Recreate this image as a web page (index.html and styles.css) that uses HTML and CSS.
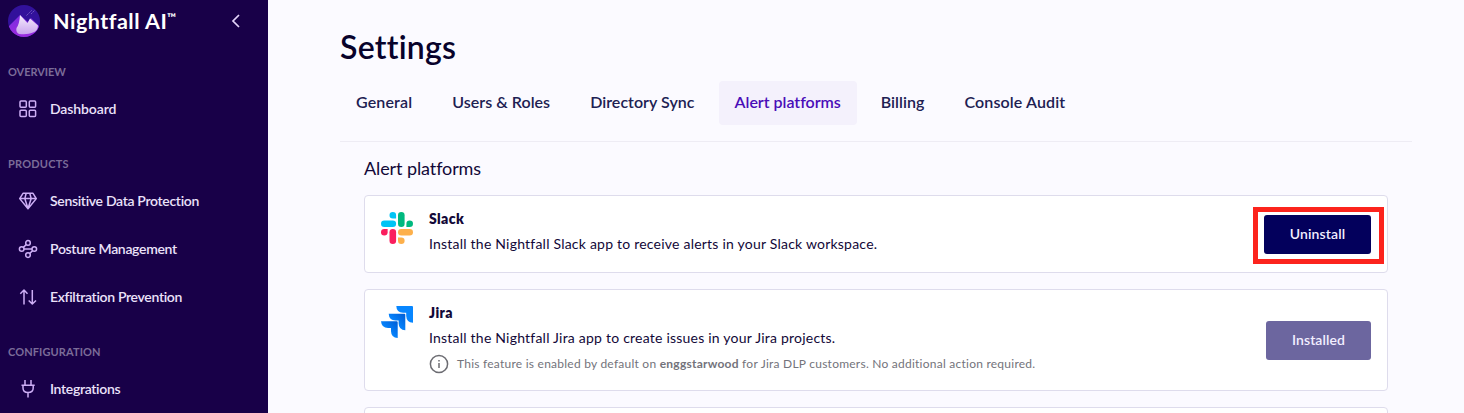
FILE: index.html
```
<!DOCTYPE html>
<html lang="en">
<head>
<meta charset="utf-8">
<title>Settings</title>
<link rel="stylesheet" href="styles.css">
</head>
<body>
<div class="app">
  <aside class="sidebar">
    <div class="brand">
      <svg class="logo" viewBox="0 0 32 32">
        <defs>
          <linearGradient id="peak" x1="0" y1="0" x2="0" y2="1"><stop offset="0" stop-color="#f5edfc"/><stop offset="1" stop-color="#c9a5ee"/></linearGradient>
          <linearGradient id="ridge" x1="0" y1="0" x2="0" y2="1"><stop offset="0" stop-color="#7a2be0"/><stop offset="1" stop-color="#9c2de0"/></linearGradient>
          <clipPath id="disc"><circle cx="16" cy="16" r="16"/></clipPath>
        </defs>
        <g clip-path="url(#disc)">
          <rect width="32" height="32" fill="#32119b"/>
          <path d="M0 22 L3 19 L12 10 L20 17 L23 13 L32 22 L27 32 H0Z" fill="url(#ridge)"/>
          <path d="M12 10 L19.500 18 L22 13.500 L30 20.500 Q30 26 25 27.500 Q20 30 11 29 Q7.500 27 8.500 23 Q11.500 19 12 10Z" fill="url(#peak)"/>
          <path d="M18.500 10.500 L24 5 M23 9 L27 5" stroke="#8067c8" stroke-width=".8" stroke-dasharray="2 .7"/>
        </g>
      </svg>
      <span class="brand-name">Nightfall AI</span><span class="tm">™</span>
      <svg class="collapse" viewBox="0 0 10 14"><path d="M8 1 L2 7 L8 13"/></svg>
    </div>
    <h2 class="group group-overview">OVERVIEW</h2>
    <a class="item item-dashboard"><svg class="icon" viewBox="0 0 20 20"><g><rect x="2" y="2" width="6.300" height="6.300" rx="1"/><rect x="11.300" y="2" width="6.300" height="6.300" rx="1"/><rect x="2" y="11.300" width="6.300" height="6.300" rx="1"/><rect x="11.300" y="11.300" width="6.300" height="6.300" rx="1"/></g></svg><span>Dashboard</span></a>
    <h2 class="group group-products">PRODUCTS</h2>
    <a class="item"><svg class="icon" viewBox="0 0 20 20"><path d="M5 2.300 H15 L18.300 7.600 L10 17.800 L1.700 7.600Z M1.700 7.600 H18.300 M8.200 2.300 L6.800 7.600 L10 17.500 L13.200 7.600 L11.800 2.300"/></svg><span>Sensitive Data Protection</span></a>
    <a class="item"><svg class="icon" viewBox="0 0 20 20"><circle cx="10" cy="3.900" r="2.300"/><circle cx="3.700" cy="10" r="2.300"/><circle cx="16.300" cy="10" r="2.300"/><circle cx="10" cy="16.100" r="2.300"/><path d="M6 10 H14 M8.300 5.500 L5.400 8.400 M14.600 11.600 L11.700 14.500"/></svg><span>Posture Management</span></a>
    <a class="item"><svg class="icon" viewBox="0 0 20 20"><path d="M6 17.500 V3 M2.300 6.700 L6 3 L9.500 6.700 M14.300 3 V17 M10.700 13.500 L14.300 17 L18 13.500"/></svg><span>Exfiltration Prevention</span></a>
    <h2 class="group">CONFIGURATION</h2>
    <a class="item"><svg class="icon" viewBox="0 0 20 20"><path d="M7 1 V6 M13 1 V6 M3.500 6.300 H16.700 M5 6.300 V9 Q5 13.500 10 13.500 Q15.200 13.500 15.200 9 V6.300 M10 13.500 V18.500"/></svg><span>Integrations</span></a>
  </aside>
  <main class="main">
    <h1 class="title">Settings</h1>
    <nav class="tabs">
      <a class="tab tab-general">General</a>
      <a class="tab">Users &amp; Roles</a>
      <a class="tab">Directory Sync</a>
      <a class="tab tab-alerts active">Alert platforms</a>
      <a class="tab">Billing</a>
      <a class="tab tab-audit">Console Audit</a>
    </nav>
    <section class="panel">
      <h2 class="subtitle">Alert platforms</h2>
      <article class="card slack-card">
        <svg class="app-logo" viewBox="0 0 32 32">
          <path fill="#00c4f5" d="M15.100 6.600 H11.800 A3.300 3.300 0 1 1 15.100 3.300Z"/>
          <rect x="0" y="8.500" width="15.100" height="6.600" rx="3.300" fill="#00c4f5"/>
          <rect x="17" y="0" width="6.600" height="15.100" rx="3.300" fill="#00b97f"/>
          <path fill="#00b97f" d="M25.400 15.100 V11.800 A3.300 3.300 0 1 1 28.700 15.100Z"/>
          <path fill="#fa1e5e" d="M6.600 17 V20.300 A3.300 3.300 0 1 1 3.300 17Z"/>
          <rect x="8.500" y="17" width="6.600" height="15" rx="3.300" fill="#fa1e5e"/>
          <rect x="17" y="17" width="15" height="6.600" rx="3.300" fill="#fdb04b"/>
          <path fill="#fdb04b" d="M17 25.400 H20.300 A3.300 3.300 0 1 1 17 28.700Z"/>
        </svg>
        <div class="info">
          <h3 class="name">Slack</h3>
          <p class="desc">Install the Nightfall Slack app to receive alerts in your Slack workspace.</p>
        </div>
        <button class="btn btn-primary">Uninstall</button>
        <div class="highlight"></div>
      </article>
      <article class="card jira-card">
        <svg class="app-logo" viewBox="0 0 32 32">
          <defs><linearGradient id="fold" x1="1" y1="0" x2=".4" y2=".6"><stop offset=".1" stop-color="#0060d8"/><stop offset="1" stop-color="#0786ff"/></linearGradient></defs>
          <path fill="#0786ff" d="M15.300 0 H31 Q32 0 32 1 V16.700 Q25.500 16.500 25.200 10 V6.700 H22 Q15.500 6.500 15.300 0Z"/>
          <path fill="url(#fold)" d="M7.700 7.700 H23.300 Q24.300 7.700 24.300 8.700 V24.300 Q17.800 24 17.600 17.500 V14.500 H14.500 Q8 14.200 7.700 7.700Z"/>
          <path fill="url(#fold)" d="M0 15.300 H15.700 Q16.700 15.300 16.700 16.300 V32 Q10.200 31.700 10 25.200 V22.100 H7 Q.5 22 0 15.300Z"/>
        </svg>
        <div class="info">
          <h3 class="name">Jira</h3>
          <p class="desc">Install the Nightfall Jira app to create issues in your Jira projects.</p>
          <p class="note"><svg class="info-icon" viewBox="0 0 20 20"><circle cx="10" cy="10" r="8.600"/><path d="M10 9 V14 M10 6 V7.600"/></svg><span class="note-text">This feature is enabled by default on <b>enggstarwood</b> for Jira DLP customers. No additional action required.</span></p>
        </div>
        <button class="btn btn-muted">Installed</button>
      </article>
      <article class="card next-card"></article>
    </section>
  </main>
</div>
</body>
</html>
```
FILE: styles.css
```
* { box-sizing: border-box; }
body { margin: 0; font-family: Lato, "Open Sans", sans-serif; font-variant-ligatures: none; background: #fbfaff; }
h1, h2, h3, p { margin: 0; }
.app { display: flex; height: 413px; overflow: hidden; }

.sidebar { width: 268px; flex: none; background: #180048; color: #ebe2fa; }
.brand { display: flex; align-items: center; height: 42px; padding: 0 27px 0 8px; }
.logo { width: 32px; height: 32px; }
.brand-name { margin-left: 13px; padding-bottom: 1px; font-size: 21.5px; line-height: 26px; font-weight: 700; letter-spacing: .5px; color: #fff; white-space: nowrap; }
.tm { align-self: flex-start; margin-top: 11px; font-size: 12px; line-height: 14px; font-weight: 700; color: #fff; }
.collapse { width: 10px; height: 14px; margin-left: auto; fill: none; stroke: #e4d4fa; stroke-width: 1.7; }
.group { height: 60px; padding: 22px 8px 0; font-size: 11px; line-height: 16px; font-weight: 700; letter-spacing: .1px; color: #7b6c98; }
.group-overview { letter-spacing: -.05px; }
.group-products { letter-spacing: .2px; }
.item { display: flex; align-items: center; height: 32px; margin-bottom: 16px; padding-left: 18px; font-size: 14px; font-weight: 600; line-height: 20px; letter-spacing: -.32px; white-space: nowrap; }
.item-dashboard { letter-spacing: -.1px; }
.item + .group { height: 53px; padding-top: 15px; }
.group + .item { margin-top: -9px; }
.item span { padding-bottom: 1px; }
.icon { width: 20px; height: 20px; margin-right: 12px; fill: none; stroke: #cdaef5; stroke-width: 1.5; stroke-linejoin: round; }

.main { flex: 1; padding: 27px 52px 0 72px; color: #120838; }
.title { font-size: 32px; line-height: 40px; font-weight: 600; letter-spacing: .25px; color: #08022b; }
.tabs { display: flex; gap: 8px; height: 75px; padding: 14px 0 16px; border-bottom: 1px solid #eeecf4; }
.tab { padding: 0 16px; border-radius: 4px; font-size: 16px; line-height: 42px; font-weight: 600; letter-spacing: .04px; color: #202052; white-space: nowrap; }
.tab-general { letter-spacing: .14px; }
.tab-alerts { letter-spacing: -.02px; }
.tab-audit { letter-spacing: .14px; }
.tab.active { background: #f4f1fc; color: #4a0db8; }
.panel { padding: 14px 24px 0; }
.subtitle { height: 39px; font-size: 18px; line-height: 24px; font-weight: 400; letter-spacing: -.1px; }
.card { position: relative; display: flex; margin-bottom: 16px; padding: 16px; border: 1px solid #dedcec; border-radius: 4px; background: #fff; }
.slack-card { height: 78px; }
.jira-card { height: 102px; }
.next-card { height: 78px; }
.app-logo { width: 32px; height: 32px; }
.info { flex: 1; margin-left: 16px; }
.name { height: 25px; margin-top: -4px; font-size: 14px; line-height: 22px; font-weight: 800; letter-spacing: .4px; }
.desc { font-size: 14px; line-height: 22px; letter-spacing: .22px; }
.note { display: flex; align-items: center; height: 20px; margin-top: 5px; font-size: 12px; color: #73737b; letter-spacing: .24px; }
.note-text { padding-bottom: 1px; }
.info-icon { width: 20px; height: 20px; margin-right: 8px; fill: none; stroke: #6c6c72; stroke-width: 1.5; }
.btn { align-self: center; height: 39px; padding: 0 0 2px; border: 0; border-radius: 3px; font: 600 14px/37px Lato, sans-serif; color: #f3efff; letter-spacing: .1px; }
.btn-primary { width: 107px; background: #03005c; }
.btn-muted { width: 105px; background: #6c669f; }
.highlight { position: absolute; top: 11px; right: 3px; width: 131px; height: 57px; border: 5px solid #fc241d; }
```
